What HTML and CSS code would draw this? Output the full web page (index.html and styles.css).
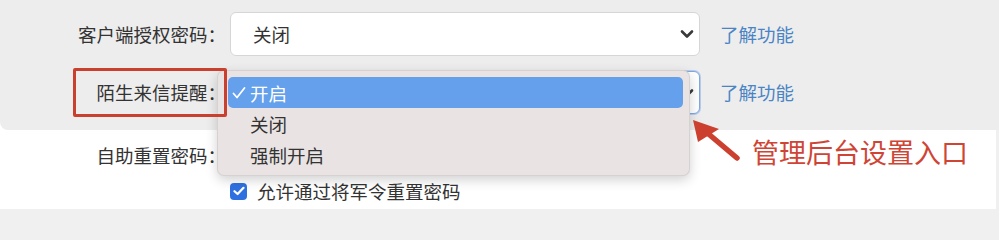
FILE: index.html
```html
<!DOCTYPE html>
<html lang="zh-CN">
<head>
<meta charset="utf-8">
<title>设置</title>
<link rel="stylesheet" href="styles.css">
</head>
<body>
<div class="sheet">
  <div class="panel">
    <div class="row row-1">
      <label class="lbl">客户端授权密码：</label>
      <div class="select">
        <span class="value">关闭</span>
        <svg class="chev" width="14" height="10" viewBox="0 0 14 10"><polyline points="2,2.5 7,7.5 12,2.5" fill="none" stroke="#3a3a3a" stroke-width="2.6" stroke-linecap="round" stroke-linejoin="round"/></svg>
      </div>
      <a class="link">了解功能</a>
    </div>
    <div class="row row-2">
      <label class="lbl">陌生来信提醒：</label>
      <div class="select focus">
        <span class="value"></span>
        <svg class="chev" width="14" height="10" viewBox="0 0 14 10"><polyline points="2,2.5 7,7.5 12,2.5" fill="none" stroke="#3a3a3a" stroke-width="2.6" stroke-linecap="round" stroke-linejoin="round"/></svg>
      </div>
      <a class="link">了解功能</a>
    </div>
  </div>
  <div class="lower">
    <div class="row row-3">
      <label class="lbl">自助重置密码：</label>
    </div>
    <div class="check-row">
      <span class="cb"><svg width="12" height="10" viewBox="0 0 12 10"><polyline points="1.5,5.2 4.6,8 10.5,1.8" fill="none" stroke="#fff" stroke-width="2.2" stroke-linecap="round" stroke-linejoin="round"/></svg></span>
      <span class="cb-text">允许通过将军令重置密码</span>
    </div>
  </div>
</div>

<div class="menu">
  <div class="item selected"><span class="tick"><svg width="14" height="14" viewBox="0 0 14 14"><polyline points="1.5,7.5 5,11.5 12.5,2" fill="none" stroke="#fff" stroke-width="1.8" stroke-linecap="round" stroke-linejoin="round"/></svg></span>开启</div>
  <div class="item"><span class="tick"></span>关闭</div>
  <div class="item"><span class="tick"></span>强制开启</div>
</div>

<div class="mark-box"></div>

<svg class="arrow" width="999" height="214" viewBox="0 0 999 214">
  <line x1="737" y1="158" x2="705" y2="131" stroke="#cc4030" stroke-width="5.5" stroke-linecap="round"/>
  <polygon points="693,120 698,142 719,129" fill="#cc4030"/>
</svg>

<div class="note">管理后台设置入口</div>
</body>
</html>
```

FILE: styles.css
```css
* { box-sizing: border-box; }
html, body { margin: 0; padding: 0; }
html { background: #f0f0f0; }
body {
  width: 999px;
  height: 214px;
  overflow: hidden;
  background: #f0f0f0;
  font-family: "Noto Sans CJK SC", "Noto Sans", sans-serif;
  position: relative;
}
.sheet {
  width: 996px;
  height: 209px;
  background: #ffffff;
}
.panel {
  width: 999px;
  height: 130px;
  background: #ededed;
  border-bottom-left-radius: 8px;
  padding-top: 12px;
  display: flex;
  flex-direction: column;
  gap: 15px;
}
.row {
  display: flex;
  align-items: center;
}
.row-1 { height: 44px; }
.row-2 { height: 43px; }
.lbl {
  width: 226px;
  text-align: right;
  font-size: 18.5px;
  color: #333;
  line-height: 1;
  margin-right: 4px;
}
.select {
  width: 470px;
  height: 100%;
  background: #fff;
  border: 1px solid #d6d6d6;
  border-radius: 6px;
  display: flex;
  align-items: center;
  justify-content: space-between;
  padding: 0 5px 0 22px;
}
.select.focus {
  border-color: #7fa9e2;
  box-shadow: 0 0 0 1px rgba(120, 165, 230, 0.45);
}
.value {
  font-size: 18.5px;
  color: #333;
}
.chev { display: block; }
.link {
  margin-left: 20px;
  font-size: 18.5px;
  color: #4a84c4;
  line-height: 1;
}
.lower {
  padding-top: 10px;
}
.row-3 { height: 30px; }
.check-row {
  margin-top: 6px;
  height: 30px;
  display: flex;
  align-items: center;
  padding-left: 230px;
}
.cb {
  width: 17px;
  height: 17px;
  border-radius: 4px;
  background: #2f70e0;
  display: flex;
  align-items: center;
  justify-content: center;
  margin-right: 10px;
}
.cb svg { display: block; }
.cb-text {
  font-size: 18.5px;
  color: #333;
}
.menu {
  position: absolute;
  left: 217px;
  top: 70px;
  width: 473px;
  height: 106px;
  background: #e9e4e3;
  border: 1px solid rgba(0, 0, 0, 0.08);
  border-radius: 7px;
  box-shadow: 0 4px 12px rgba(0, 0, 0, 0.18);
  padding: 6px 6px 6px 10px;
}
.item {
  height: 31px;
  display: flex;
  align-items: center;
  padding-left: 4px;
  font-size: 18.5px;
  color: #333;
  border-radius: 5px;
}
.item.selected {
  background: #64a0ec;
  color: #fff;
}
.tick {
  width: 18px;
  height: 14px;
  flex: 0 0 18px;
  display: flex;
  align-items: center;
}
.tick svg { display: block; }
.mark-box {
  position: absolute;
  left: 73px;
  top: 68px;
  width: 154px;
  height: 49px;
  border: 3.5px solid #c9402f;
  border-radius: 2px;
}
.arrow {
  position: absolute;
  left: 0;
  top: 0;
  pointer-events: none;
}
.note {
  position: absolute;
  left: 752px;
  top: 134px;
  font-size: 27px;
  line-height: 36px;
  color: #cf4535;
}
```
